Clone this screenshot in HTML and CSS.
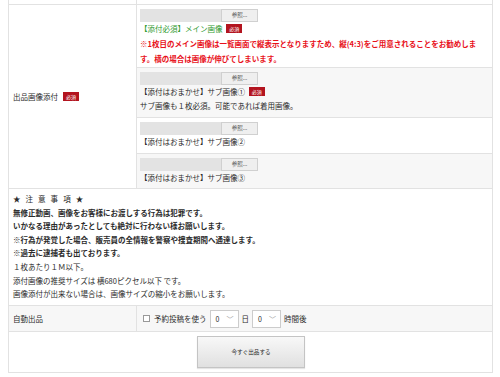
FILE: index.html
```html
<!DOCTYPE html>
<html lang="ja">
<head>
<meta charset="utf-8">
<link rel="stylesheet" href="styles.css">
</head>
<body>
<div class="table">
  <div class="row top"><div class="cell label"></div><div class="cell"></div></div>
  <div class="row images">
    <div class="cell label center">出品画像添付 <span class="badge">必須</span></div>
    <div class="cell files">
      <div class="sub s1">
        <div class="file"><span class="field"></span><span class="btn">参照...</span></div>
        <div class="line green">【添付必須】メイン画像 <span class="badge">必須</span></div>
        <div class="red">※1枚目のメイン画像は一覧画面で縦表示となりますため、縦(4:3)をご用意されることをお勧めします。横の場合は画像が伸びてしまいます。</div>
      </div>
      <div class="sub gray s2">
        <div class="file"><span class="field"></span><span class="btn">参照...</span></div>
        <div class="line">【添付はおまかせ】サブ画像① <span class="badge">必須</span></div>
        <div class="line">サブ画像も１枚必須。可能であれば着用画像。</div>
      </div>
      <div class="sub s3">
        <div class="file"><span class="field"></span><span class="btn">参照...</span></div>
        <div class="line">【添付はおまかせ】サブ画像②</div>
      </div>
      <div class="sub gray s4">
        <div class="file"><span class="field"></span><span class="btn">参照...</span></div>
        <div class="line">【添付はおまかせ】サブ画像③</div>
      </div>
    </div>
  </div>
  <div class="notes">
    <p>★&nbsp;&nbsp;&nbsp;注&nbsp;&nbsp;&nbsp;意&nbsp;&nbsp;&nbsp;事&nbsp;&nbsp;&nbsp;項&nbsp;&nbsp;&nbsp;★</p>
    <p class="b">無修正動画、画像をお客様にお渡しする行為は犯罪です。</p>
    <p class="b">いかなる理由があったとしても絶対に行わない様お願いします。</p>
    <p class="b">※行為が発覚した場合、販売員の全情報を警察や捜査期間へ通達します。</p>
    <p class="b">※過去に逮捕者も出ております。</p>
    <p>１枚あたり１Ｍ以下。</p>
    <p>添付画像の推奨サイズは 横680ピクセル以下 です。</p>
    <p>画像添付が出来ない場合は、画像サイズの縮小をお願いします。</p>
  </div>
  <div class="row auto">
    <div class="cell label">自動出品</div>
    <div class="cell opts">
      <span class="check"></span><span>予約投稿を使う</span>
      <span class="select">0<span class="chev">﹀</span></span><span>日</span>
      <span class="select">0<span class="chev">﹀</span></span><span>時間後</span>
    </div>
  </div>
  <div class="submit"><span class="go">今すぐ出品する</span></div>
</div>
</body>
</html>
```
FILE: styles.css
```css
* { box-sizing: border-box; }
html, body { margin: 0; padding: 0; background: #fff; }
body {
  font-family: "Noto Sans CJK JP", "Noto Sans", sans-serif;
  font-size: 7.5px;
  color: #2b2b2b;
  width: 500px;
  height: 377px;
  overflow: hidden;
}
.table {
  margin-left: 8px;
  width: 485px;
  border-left: 1px solid #e2e2e2;
  border-right: 1px solid #e2e2e2;
}
.row {
  display: grid;
  grid-template-columns: 128px 1fr;
  border-bottom: 1px solid #e2e2e2;
}
.cell.label {
  border-right: 1px solid #e2e2e2;
  padding-left: 4px;
  display: flex;
  align-items: center;
  gap: 3px;
}
.top { height: 5px; }
.badge {
  display: inline-block;
  background: #b3141f;
  color: #fff;
  font-size: 5px;
  line-height: 9px;
  height: 9px;
  padding: 0 3px;
  vertical-align: 1px;
  margin-left: 2px;
}
.files { display: flex; flex-direction: column; }
.sub { padding: 4px 3px 0 3px; line-height: 14px; }
.sub + .sub { border-top: 1px solid #e2e2e2; }
.sub.gray { background: #f7f7f7; }
.s1 { height: 62px; padding-top: 4px; }
.s2 { height: 50px; }
.s3 { height: 36px; }
.s4 { height: 35px; }
.file { display: flex; height: 13px; width: 118px; }
.field { flex: 1; background: #e3e3e3; }
.btn {
  width: 37px;
  background: #efefef;
  border: 1px solid #d0d0d0;
  font-size: 5.5px;
  line-height: 11px;
  text-align: center;
  color: #555;
}
.line { white-space: nowrap; }
.green { color: #2e9a2e; }
.red { color: #e8101a; font-weight: bold; line-height: 15px; max-width: 346px; }
.notes {
  border-bottom: 1px solid #e2e2e2;
  padding: 3px 4px 3px 4px;
  height: 117px;
}
.notes p { margin: 0; line-height: 13.6px; white-space: nowrap; }
.notes .b { font-weight: bold; }
.auto { background: #f7f7f7; height: 26px; }
.opts { display: flex; align-items: center; gap: 3px; padding-left: 6px; }
.check {
  width: 7px; height: 7px;
  border: 1px solid #999;
  background: #fff;
  margin-right: 1px;
}
.select {
  display: inline-flex;
  align-items: center;
  justify-content: space-between;
  width: 29px;
  height: 18px;
  background: #fff;
  border: 1px solid #ccc;
  padding: 0 4px 0 5px;
  font-size: 7px;
}
.chev { color: #999; font-size: 7px; }
.submit {
  height: 41px;
  border-bottom: 1px solid #e2e2e2;
  display: flex;
  justify-content: center;
  align-items: center;
}
.go {
  width: 108px;
  height: 32px;
  border: 1px solid #c4c4c4;
  background: linear-gradient(#f8f8f8, #e0e0e0);
  font-size: 5.6px;
  display: flex;
  align-items: center;
  justify-content: center;
  margin-left: 1px;
  box-shadow: 0 1px 1px rgba(0,0,0,0.1);
}
```
